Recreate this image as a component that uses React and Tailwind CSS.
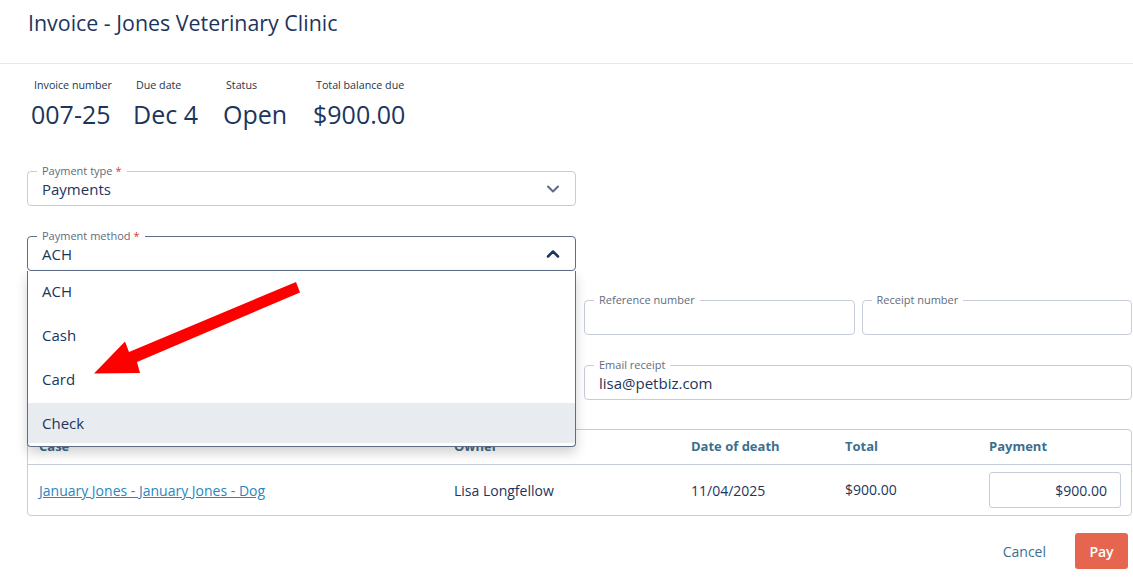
import React from "react";
import { ChevronDown, ChevronUp } from "lucide-react";

const font = { fontFamily: '"Open Sans", "Liberation Sans", sans-serif' };

function Outlined({ label, required, value, focused, width, children }) {
  return (
    <div
      className={`relative h-[35px] rounded-[4px] border bg-white ${
        focused ? "border-[#5d6d88]" : "border-[#c7cdd8]"
      } ${width || ""}`}
    >
      <span className="absolute -top-[8px] left-[9px] bg-white px-[5px] text-[11px] leading-[14px] text-[#5f6b7d]">
        {label}
        {required && <span className="ml-[3px] text-[#d9392b]">*</span>}
      </span>
      <div className="flex h-full items-center justify-between pl-[14px] pr-[12px] pt-[1px] text-[15px] text-[#1c355e]">
        <span>{value}</span>
        {children}
      </div>
    </div>
  );
}

function Stat({ label, value, width }) {
  return (
    <div className={`flex flex-col ${width || ""}`}>
      <span className="pl-[3px] text-[10.7px] leading-[16px] text-[#24364f]">{label}</span>
      <span className="mt-[5px] text-[25px] leading-[32px] text-[#1c355e]">{value}</span>
    </div>
  );
}

export default function App() {
  const options = ["ACH", "Cash", "Card", "Check"];
  return (
    <div className="relative h-[584px] w-[1133px] overflow-hidden bg-white" style={font}>
      <div className="flex h-[64px] items-start border-b border-[#e6e8ec] pl-[28px] pt-[8px]">
        <h1 className="text-[21.4px] leading-[30px] text-[#1c355e]">Invoice - Jones Veterinary Clinic</h1>
      </div>

      <div className="pl-[27px] pr-[1px]">
        <div className="mt-[13px] flex pl-[4px]">
          <Stat label="Invoice number" value="007-25" width="w-[102px]" />
          <Stat label="Due date" value="Dec 4" width="w-[90px]" />
          <Stat label="Status" value="Open" width="w-[90px]" />
          <Stat label="Total balance due" value="$900.00" />
        </div>

        <div className="mt-[41px]">
          <Outlined label="Payment type" required value="Payments" width="w-[549px]">
            <ChevronDown size={20} strokeWidth={2.5} className="text-[#5d6d88]" />
          </Outlined>
        </div>

        <div className="relative mt-[30px] w-[549px]">
          <Outlined label="Payment method" required value="ACH" focused>
            <ChevronUp size={20} strokeWidth={3} className="text-[#1c355e]" />
          </Outlined>
          <ul className="absolute left-0 top-[35px] z-20 w-[549px] rounded-b-[4px] border border-t-0 border-[#5d6d88] bg-white pb-[3px] shadow-[0_6px_12px_rgba(0,0,0,0.18)]">
            {options.map((o, i) => (
              <li
                key={o}
                className={`flex h-[40px] items-center pl-[14px] text-[15px] text-[#1c355e] ${
                  i > 0 ? "mt-[4px]" : ""
                } ${o === "Check" ? "bg-[#e8ebef]" : ""}`}
              >
                {o}
              </li>
            ))}
          </ul>
        </div>

        <div className="mt-[29px] flex gap-[8px]">
          <div className="w-[549px]" />
          <div className="flex flex-1 flex-col gap-[30px]">
            <div className="flex gap-[7px]">
              <Outlined label="Reference number" width="flex-1" />
              <Outlined label="Receipt number" width="flex-1" />
            </div>
            <Outlined label="Email receipt" value="lisa@petbiz.com" />
          </div>
        </div>

        <table className="mt-[29px] w-full table-fixed border-separate border-spacing-0 rounded-[4px] border border-[#c7cdd8] text-left">
          <thead>
            <tr className="h-[35px] text-[13px] font-bold text-[#3d6f8e]">
              <th className="w-[426px] border-b border-[#c7cdd8] pl-[11px] font-bold">Case</th>
              <th className="w-[237px] border-b border-[#c7cdd8] font-bold">Owner</th>
              <th className="w-[154px] border-b border-[#c7cdd8] font-bold">Date of death</th>
              <th className="w-[144px] border-b border-[#c7cdd8] font-bold">Total</th>
              <th className="border-b border-[#c7cdd8] font-bold">Payment</th>
            </tr>
          </thead>
          <tbody>
            <tr className="h-[50px] text-[14px] text-[#1c355e]">
              <td className="pl-[11px]">
                <a href="#" className="text-[#2a86c0] underline">
                  January Jones - January Jones - Dog
                </a>
              </td>
              <td>Lisa Longfellow</td>
              <td>11/04/2025</td>
              <td className="pb-[2px]">$900.00</td>
              <td>
                <div className="flex h-[36px] w-[132px] items-center justify-end rounded-[3px] border border-[#c7cdd8] pr-[13px]">
                  $900.00
                </div>
              </td>
            </tr>
          </tbody>
        </table>

        <div className="mt-[17px] flex items-center justify-end gap-[29px] pr-[4px]">
          <button className="text-[14px] text-[#3d6f8e]">Cancel</button>
          <button className="h-[36px] w-[53px] rounded-[3px] bg-[#e5654f] text-[14px] font-semibold text-white">
            Pay
          </button>
        </div>
      </div>

      <svg className="pointer-events-none absolute left-0 top-0 z-30" width="1133" height="584">
        <polygon
          points="296,282 300,292.5 137,362 140,373 94,373.5 125,341.5 129,352"
          fill="#ff0000"
        />
      </svg>
    </div>
  );
}
